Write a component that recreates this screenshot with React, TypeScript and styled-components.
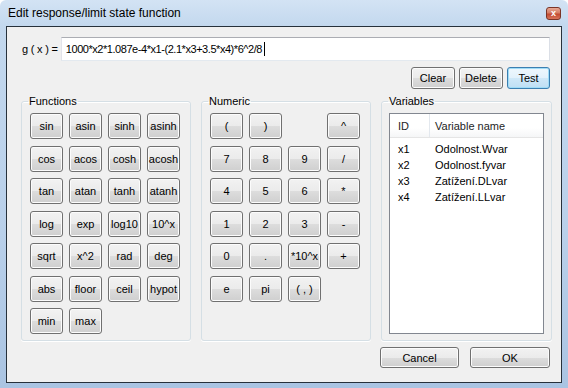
import styled, { createGlobalStyle } from "styled-components";

const GlobalStyle = createGlobalStyle`
  body {
    margin: 0;
    background: #ffffff;
    font-family: "Liberation Sans", Arial, sans-serif;
  }
`;

const functionKeys = [
    "sin", "asin", "sinh", "asinh",
    "cos", "acos", "cosh", "acosh",
    "tan", "atan", "tanh", "atanh",
    "log", "exp", "log10", "10^x",
    "sqrt", "x^2", "rad", "deg",
    "abs", "floor", "ceil", "hypot",
    "min", "max",
];

// empty string = gap in the keypad
const numericKeys = [
    "(", ")", "", "^",
    "7", "8", "9", "/",
    "4", "5", "6", "*",
    "1", "2", "3", "-",
    "0", ".", "*10^x", "+",
    "e", "pi", "( , )",
];

const variables = [
    { id: "x1", name: "Odolnost.Wvar" },
    { id: "x2", name: "Odolnost.fyvar" },
    { id: "x3", name: "Zatížení.DLvar" },
    { id: "x4", name: "Zatížení.LLvar" },
];

const Window = styled.div`
    width: 568px;
    height: 388px;
    box-sizing: border-box;
    display: flex;
    flex-direction: column;
    border-radius: 6px 6px 0 0;
    background: linear-gradient(
        to bottom,
        #d3e3f4 0px,
        #c3d8ee 26px,
        #b9d0ea 60%,
        #aac4e2 100%
    );
`;

const TitleBar = styled.div`
    height: 26px;
    flex: none;
    display: flex;
    align-items: center;
    justify-content: space-between;
    padding: 0 7px 0 8px;
`;

const Title = styled.span`
    font-family: "Liberation Sans", Arial, sans-serif;
    font-size: 12px;
    color: #000;
`;

const CloseButton = styled.div`
    width: 15px;
    height: 13px;
    box-sizing: border-box;
    border: 1px solid #7a3426;
    border-radius: 3px;
    background: linear-gradient(to bottom, #e6a894 0%, #d57c63 45%, #c24a30 55%, #d8745a 100%);
    color: #fff;
    font-size: 9px;
    font-weight: bold;
    line-height: 11px;
    text-align: center;
`;

const Client = styled.div`
    flex: 1;
    margin: 0 6px 5px 6px;
    border: 1px solid #27313b;
    background: #f0f0f0;
    display: flex;
    flex-direction: column;
    padding: 0 11px 14px 14px;
    font-size: 11px;
    color: #000;
`;

const FormulaRow = styled.div`
    display: flex;
    align-items: center;
    gap: 3px;
    margin-top: 10px;
    padding-left: 1px;
`;

const Label = styled.span`
    white-space: pre;
    font-size: 11px;
    letter-spacing: -0.2px;
`;

const Input = styled.div`
    flex: 1;
    height: 24px;
    box-sizing: border-box;
    border: 1px solid #abadb3;
    border-color: #abadb3 #dbdfe6 #e3e9ef #e2e3ea;
    background: #fff;
    display: flex;
    align-items: center;
    padding-left: 4px;
    font-size: 11px;
    letter-spacing: -0.45px;
`;

const Caret = styled.span`
    display: inline-block;
    width: 1px;
    height: 14px;
    margin-left: 2px;
    background: #000;
`;

const ActionRow = styled.div`
    display: flex;
    justify-content: flex-end;
    gap: 4px;
    margin-top: 6px;
`;

const Button = styled.button<{ $w?: number; $h?: number; $default?: boolean }>`
    width: ${(p) => p.$w ?? 33}px;
    height: ${(p) => p.$h ?? 26}px;
    box-sizing: border-box;
    padding: 0;
    margin: 0;
    border: 1px solid ${(p) => (p.$default ? "#3c7fb1" : "#707070")};
    border-radius: 3px;
    background: ${(p) =>
        p.$default
            ? "linear-gradient(to bottom, #eef7fd 0%, #e2f1fb 50%, #cfe8f8 50%, #bfdff4 100%)"
            : "linear-gradient(to bottom, #f2f2f2 0%, #ebebeb 50%, #dddddd 50%, #cfcfcf 100%)"};
    box-shadow: inset 0 0 0 1px ${(p) => (p.$default ? "#9fdcf7" : "#fcfcfc")};
    font-family: "Liberation Sans", Arial, sans-serif;
    font-size: 11px;
    color: #000;
    white-space: nowrap;
`;

const Groups = styled.div`
    flex: 1;
    display: grid;
    grid-template-columns: 170px 170px 171px;
    column-gap: 10px;
    margin-top: 6px;
`;

const Group = styled.fieldset`
    margin: 0;
    padding: 5px 7px 0 7px;
    border: 1px solid #d5dfe5;
    border-radius: 3px;
    box-shadow: 0 1px 0 #fff, inset 0 1px 0 #fff;
    min-width: 0;
`;

const Legend = styled.legend`
    padding: 0 1px;
    margin-left: -1px;
    font-size: 11px;
    line-height: 13px;
`;

const Keypad = styled.div`
    display: grid;
    grid-template-columns: repeat(4, 33px);
    grid-auto-rows: 26px;
    column-gap: 6px;
    row-gap: 6.5px;
    padding-left: 1px;
`;

const ListView = styled.div`
    height: 221px;
    border: 1px solid #828790;
    background: #fff;
    box-sizing: border-box;
`;

const HeaderRow = styled.div`
    height: 23px;
    display: flex;
    align-items: center;
    border-bottom: 1px solid #e5e5e5;
    background: linear-gradient(to bottom, #ffffff 0%, #ffffff 60%, #f5f6f7 100%);
    margin-bottom: 3px;
`;

const Cell = styled.div<{ $w?: number }>`
    ${(p) => (p.$w ? `width: ${p.$w}px; flex: none;` : "flex: 1;")}
    padding-left: ${(p) => (p.$w ? 8 : 5)}px;
    box-sizing: border-box;
    height: 100%;
    display: flex;
    align-items: center;
    font-size: 11px;
`;

const HeaderCell = styled(Cell)`
    color: #1e1e1e;
    border-right: ${(p) => (p.$w ? "1px solid #e3e8ee" : "none")};
`;

const Row = styled.div`
    height: 16px;
    display: flex;
    align-items: center;
`;

const Footer = styled.div`
    display: flex;
    justify-content: flex-end;
    gap: 11px;
    margin-top: 6px;
`;

function App() {
    return (
        <Window>
            <GlobalStyle />
            <TitleBar>
                <Title>Edit response/limit state function</Title>
                <CloseButton>x</CloseButton>
            </TitleBar>
            <Client>
                <FormulaRow>
                    <Label>g ( x ) =</Label>
                    <Input>
                        1000*x2*1.087e-4*x1-(2.1*x3+3.5*x4)*6^2/8
                        <Caret />
                    </Input>
                </FormulaRow>
                <ActionRow>
                    <Button $w={44} $h={22}>Clear</Button>
                    <Button $w={44} $h={22}>Delete</Button>
                    <Button $w={43} $h={22} $default>Test</Button>
                </ActionRow>
                <Groups>
                    <Group>
                        <Legend>Functions</Legend>
                        <Keypad>
                            {functionKeys.map((k) => (
                                <Button key={k}>{k}</Button>
                            ))}
                        </Keypad>
                    </Group>
                    <Group>
                        <Legend>Numeric</Legend>
                        <Keypad>
                            {numericKeys.map((k, i) =>
                                k ? <Button key={i}>{k}</Button> : <span key={i} />
                            )}
                        </Keypad>
                    </Group>
                    <Group>
                        <Legend>Variables</Legend>
                        <ListView>
                            <HeaderRow>
                                <HeaderCell $w={40}>ID</HeaderCell>
                                <HeaderCell>Variable name</HeaderCell>
                            </HeaderRow>
                            {variables.map((v) => (
                                <Row key={v.id}>
                                    <Cell $w={40}>{v.id}</Cell>
                                    <Cell>{v.name}</Cell>
                                </Row>
                            ))}
                        </ListView>
                    </Group>
                </Groups>
                <Footer>
                    <Button $w={79} $h={21}>Cancel</Button>
                    <Button $w={80} $h={21}>OK</Button>
                </Footer>
            </Client>
        </Window>
    );
}

export default App;
